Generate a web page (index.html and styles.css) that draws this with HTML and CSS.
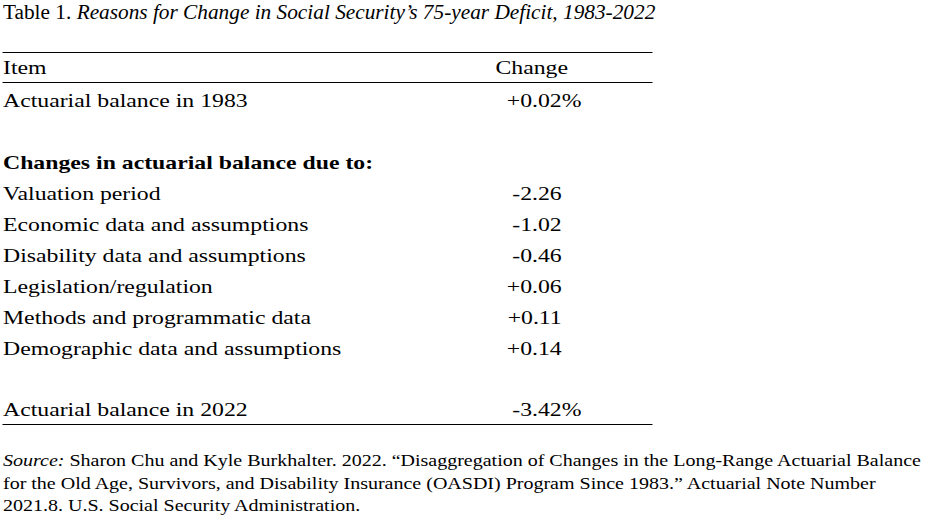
FILE: index.html
```html
<!DOCTYPE html>
<html lang="en">
<head>
<meta charset="utf-8">
<title>Table 1</title>
<link rel="stylesheet" href="styles.css">
</head>
<body>
<h1 class="title">Table 1. <em>Reasons for Change in Social Security’s 75-year Deficit, 1983-2022</em></h1>
<div class="page">
  <div class="table">
    <div class="row head">
      <div class="label">Item</div>
      <div class="value">Change</div>
    </div>
    <div class="row first">
      <div class="label">Actuarial balance in 1983</div>
      <div class="value"><span class="num">+0.02</span>%</div>
    </div>
    <div class="row blank"></div>
    <div class="row">
      <div class="label strong">Changes in actuarial balance due to:</div>
      <div class="value"></div>
    </div>
    <div class="row">
      <div class="label">Valuation period</div>
      <div class="value"><span class="num">-2.26</span></div>
    </div>
    <div class="row">
      <div class="label">Economic data and assumptions</div>
      <div class="value"><span class="num">-1.02</span></div>
    </div>
    <div class="row">
      <div class="label">Disability data and assumptions</div>
      <div class="value"><span class="num">-0.46</span></div>
    </div>
    <div class="row">
      <div class="label">Legislation/regulation</div>
      <div class="value"><span class="num">+0.06</span></div>
    </div>
    <div class="row">
      <div class="label">Methods and programmatic data</div>
      <div class="value"><span class="num">+0.11</span></div>
    </div>
    <div class="row">
      <div class="label">Demographic data and assumptions</div>
      <div class="value"><span class="num">+0.14</span></div>
    </div>
    <div class="row blank"></div>
    <div class="row last">
      <div class="label">Actuarial balance in 2022</div>
      <div class="value"><span class="num">-3.42</span>%</div>
    </div>
  </div>
  <div class="source">
    <div class="src-line"><em class="src-label">Source:</em><span class="src-text">Sharon Chu and Kyle Burkhalter. 2022. “Disaggregation of Changes in the Long-Range Actuarial Balance</span></div>
    <div class="src-line">for the Old Age, Survivors, and Disability Insurance (OASDI) Program Since 1983.” Actuarial Note Number</div>
    <div class="src-line">2021.8. U.S. Social Security Administration.</div>
  </div>
</div>
</body>
</html>
```

FILE: styles.css
```css
html, body {
  margin: 0;
  padding: 0;
  background: #ffffff;
  overflow: hidden;
}

body {
  font-family: "Liberation Serif", "Times New Roman", serif;
  color: #000000;
}

.title {
  margin: 0;
  padding-left: 3px;
  font-size: 21.3px;
  font-weight: normal;
  line-height: 24px;
  white-space: nowrap;
}

.title em {
  font-style: italic;
}

/* The reference table is horizontally stretched relative to normal Times metrics */
.page {
  width: 744px;
  padding-left: 2.4px;
  transform: scaleX(1.25);
  transform-origin: 0 0;
}

.table {
  width: 520px;
  margin-top: 28px;
  border-top: 1px solid #000;
  border-bottom: 1px solid #000;
  font-size: 19px;
}

.row {
  display: grid;
  grid-template-columns: 394px 1fr;
  line-height: 31px;
  height: 31px;
}

.row.head {
  line-height: 29px;
  height: 29px;
  border-bottom: 1px solid #000;
}

.row.first {
  padding-top: 2px;
}

.row.last {
  line-height: 29px;
  height: 29px;
}

.label {
  white-space: nowrap;
}

.strong {
  font-weight: bold;
}

.value {
  white-space: nowrap;
}

.num {
  display: inline-block;
  width: 53px;
  text-align: right;
}

.source {
  margin-top: 25px;
  font-size: 16px;
  line-height: 22.5px;
}

.src-line {
  white-space: nowrap;
}

.src-label {
  margin-right: 4px;
}
```
